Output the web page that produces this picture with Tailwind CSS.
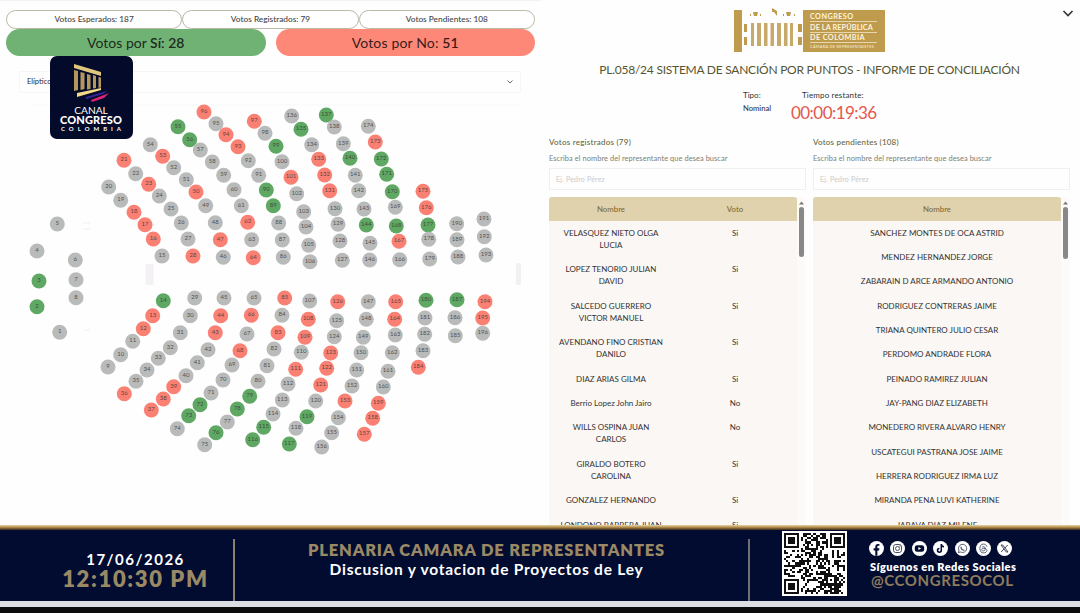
<!DOCTYPE html>
<html lang="es">
<head>
    <meta charset="UTF-8">
    <meta name="viewport" content="width=device-width, initial-scale=1.0">
    <title>Canal Congreso - Votación</title>
    <script src="https://cdn.jsdelivr.net/npm/@tailwindcss/browser@4"></script>
</head>
<body class="w-[1080px] h-[613px] overflow-hidden bg-black font-['Lato',sans-serif] text-[#2b2b2b]">
    <div class="flex flex-col h-[613px]">

        <main class="flex h-[525px] overflow-hidden bg-[#fefefe]">
            <!-- Left: results and seats -->
            <section class="relative w-[541px] shrink-0 flex flex-col pt-[9px] border-t border-[#f3f3f3]">
                <div class="flex ml-[6px] w-[529px] h-[19px] text-[8.3px] font-medium text-[#444]">
                    <div class="flex-1 flex items-center justify-center rounded-full border border-[#bcb9a8] bg-white"><span>Votos Esperados: 187</span></div>
                    <div class="flex-1 flex items-center justify-center rounded-full border border-[#bcb9a8] bg-white"><span>Votos Registrados: 79</span></div>
                    <div class="flex-1 flex items-center justify-center rounded-full border border-[#bcb9a8] bg-white"><span>Votos Pendientes: 108</span></div>
                </div>
                <div class="flex gap-[10px] ml-[6px] w-[529px] h-[27px] text-[14px] text-[#1d2b1d]">
                    <div class="flex-1 flex items-center justify-center rounded-full bg-[#6fb274]"><span>Votos por <span class="font-semibold">Sí: 28</span></span></div>
                    <div class="flex-1 flex items-center justify-center rounded-full bg-[#fe8878] text-[#3a1d1a]"><span class="tracking-[0.15px]">Votos por No: <span class="font-semibold">51</span></span></div>
                </div>
                <div class="flex items-center justify-between mt-[15px] ml-[19px] w-[502px] h-[22px] px-[7px] border border-[#f6f6f6] text-[7.5px]">
                    <span>Elíptico</span>
                    <svg class="w-[6px] h-[4px]" viewBox="0 0 6 4" fill="none" stroke="#666"><path d="M.5.5 3 3 5.500.5"/></svg>
                </div>
                <svg id="seats" class="w-[541px] h-[432px] shrink-0" viewBox="0 93 541 432" font-family="Lato, sans-serif" font-size="6" text-anchor="middle">
                    <path d="M30 105H521" stroke="#f8f8f8"/>
                    <rect x="145.500" y="264" width="8" height="21" rx="1" fill="#f3f1f3"/>
                    <rect x="516" y="263" width="5" height="22" rx="1" fill="#f1f0f2"/>
                    <path d="M83 223h7M83 229h7M84 330h6" stroke="#f0f0f0"/>
                </svg>

                <!-- Channel logo -->
                <div class="absolute left-[49.500px] top-[55px] w-[83px] h-[83px] rounded-[7px] bg-[#030a2a] flex flex-col items-center text-white">
                    <svg class="mt-[7px] w-[36px] h-[41px]" viewBox="0 0 36 41">
                        <path d="M1 1 28 9v4L1 5z" fill="#dfc67c"/>
                        <path d="M1 7l4 1v19l-4 1zM7.500 9l4 1v16l-4 1zM14 11l3.500 1v14l-3.500.5zM20 12l3 1v12l-3 .5zM25.500 14l2.500.5v10l-2.500.5z" fill="#b5975a"/>
                        <path d="M4 30 28 25v2L4 34z" fill="#f2da88"/>
                        <path d="M13 34 34 28l-4 3-17 5z" fill="#35289b"/>
                        <path d="M18 37 36 30l-5 5-12 4z" fill="#db2473"/>
                    </svg>
                    <span class="mt-[2px] text-[10.200px] leading-[9px]">CANAL</span>
                    <span class="text-[11px] leading-[10px] font-black tracking-[0.150px]">CONGRESO</span>
                    <span class="text-[6px] leading-[8px] font-bold tracking-[4px] mr-[-4px]">COLOMBIA</span>
                </div>
            </section>

            <!-- Right: bill and lists -->
            <section class="relative flex-1 flex flex-col">
                <svg class="absolute left-[521px] top-[9px] w-[12px] h-[9px]" viewBox="0 0 12 9" fill="none" stroke="#333" stroke-width="1.600"><path d="M1.500 2 6 6.500 10.500 2"/></svg>
                <div class="flex ml-[193px] mt-[7px] h-[45px]">
                    <svg class="w-[69px] h-[45px]" viewBox="0 0 69 45" fill="#bf9b4e">
                        <path d="M0 3h8v42H0zM10 17h3v8h-3zM10 30h3v8h-3zM64 17h4v8h-4zM64 30h4v8h-4z"/>
                        <path d="M17 16h3v23h-3zM23 16h4v23h-4zM30 16h3.500v23H30zM36.500 16H40v23h-3.500zM43 16h4v23h-4zM50 16h3.500v23H50zM56 16h3v23h-3z" fill="#c6a96b"/>
                        <path d="M19 5h5l-1 4h-3zM38 1l5 3v5l-3-4h-2zM52 5h5l-1 4h-3zM16 7h1v2h-1zM26 7h1v2h-1zM49 7h1v2h-1zM60 7h1v2h-1z"/>
                    </svg>
                    <div class="mt-[3px] w-[82px] h-[42px] bg-[#bf9b4e] text-[#fdf3dc] pl-[7px] pr-[8px] pt-[2px] text-[7.300px] font-bold">
                        <div class="h-[10px] leading-[9px] border-b border-[#e8d7ae] tracking-[0.400px]">CONGRESO</div>
                        <div class="h-[11px] leading-[11px] border-b border-[#e8d7ae] whitespace-nowrap tracking-[0.100px]">DE LA REPÚBLICA</div>
                        <div class="h-[10px] leading-[10px] border-b border-[#e8d7ae] tracking-[0.400px]">DE COLOMBIA</div>
                        <div class="text-[3.900px] leading-[8px] whitespace-nowrap font-normal tracking-[0.300px]">CÁMARA DE REPRESENTANTES</div>
                    </div>
                </div>
                <h1 class="mt-[10px] h-[16px] leading-[16px] pr-[2px] text-center text-[12px] tracking-[-0.240px] text-[#55552f] whitespace-nowrap">PL.058/24 SISTEMA DE SANCIÓN POR PUNTOS - INFORME DE CONCILIACIÓN</h1>
                <div class="flex ml-[202px] mt-[11px] h-[40px] text-[8px] text-[#333]">
                    <div class="w-[48px] leading-[13px]"><p>Tipo:</p><p class="text-[7.600px] font-medium">Nominal</p></div>
                    <div class="w-[86px]">
                        <p class="leading-[13px] pl-[11px] tracking-[0.150px]">Tiempo restante:</p>
                        <p class="text-[17px] leading-[22px] tracking-[-0.550px] text-[#e3584f] whitespace-nowrap">00:00:19:36</p>
                    </div>
                </div>

                <div class="flex gap-[7px] ml-[8px] mt-[8px]">
                    <div class="w-[257px]">
                        <p class="text-[8px] leading-[12px] font-medium tracking-[0.240px] text-[#66663d]">Votos registrados (79)</p>
                        <p class="mt-[5px] text-[7.400px] leading-[12px] tracking-[0.080px] text-[#7b8073]">Escriba el nombre del representante que desea buscar</p>
                        <div class="mt-[3px] h-[22px] border border-[#eef0f0] px-[6px] text-[7px] leading-[21px] tracking-[0.200px] text-[#c9c9c9]">Ej. Pedro Pérez</div>
                        <div class="mt-[7px] flex h-[328px] overflow-hidden bg-[#fcfbf9] text-[8px]">
                            <div class="w-[248px] bg-[#faf7f4]">
                                <div class="grid grid-cols-2 h-[24px] pt-[1px] items-center text-center rounded-t-[3px] bg-[#dfd2ad] text-[#806b36] text-[7.800px] font-medium"><span>Nombre</span><span>Voto</span></div>
                                <div id="registrados" class="mt-[-0.600px] text-center leading-[12.150px] text-[#333]"></div>
                            </div>
                            <div class="w-[9px] flex flex-col items-center pt-[4px]">
                                <svg class="w-[5px] h-[4px]" viewBox="0 0 5 4" fill="#777"><path d="M0 3.500 2.500.5 5 3.500z"/></svg>
                                <div class="mt-[2px] w-[5px] h-[50px] rounded-full bg-[#888]"></div>
                            </div>
                        </div>
                    </div>
                    <div class="w-[257px]">
                        <p class="text-[8px] leading-[12px] font-medium tracking-[0.200px] text-[#66663d]">Votos pendientes (108)</p>
                        <p class="mt-[5px] text-[7.400px] leading-[12px] tracking-[0.080px] text-[#7b8073]">Escriba el nombre del representante que desea buscar</p>
                        <div class="mt-[3px] h-[22px] border border-[#eef0f0] px-[6px] text-[7px] leading-[21px] tracking-[0.200px] text-[#c9c9c9]">Ej. Pedro Pérez</div>
                        <div class="mt-[7px] flex h-[328px] overflow-hidden bg-[#fcfbf9] text-[8px]">
                            <div class="w-[248px] bg-[#faf7f4]">
                                <div class="flex h-[24px] pt-[1px] items-center justify-center rounded-t-[3px] bg-[#dfd2ad] text-[#806b36] text-[7.800px] font-medium"><span>Nombre</span></div>
                                <div id="pendientes" class="mt-[-0.600px] text-center leading-[12.150px] text-[#333]"></div>
                            </div>
                            <div class="w-[9px] flex flex-col items-center pt-[4px]">
                                <svg class="w-[5px] h-[4px]" viewBox="0 0 5 4" fill="#777"><path d="M0 3.500 2.500.5 5 3.500z"/></svg>
                                <div class="mt-[2px] w-[5px] h-[52px] rounded-full bg-[#888]"></div>
                            </div>
                        </div>
                    </div>
                </div>
            </section>
        </main>

        <div class="h-[5px] shrink-0 bg-linear-to-b from-[#e9d7a5] via-[#ab8545] to-[#3b2d1c]"></div>

        <!-- Lower third -->
        <footer class="flex h-[71px] shrink-0 bg-[#020c31] font-bold text-white">
            <div class="w-[233px] pl-[38px] pt-[20px] flex flex-col items-center">
                <span class="text-[15px] leading-[18px] tracking-[1.500px]">17/06/2026</span>
                <span class="text-[22px] leading-[22px] tracking-[1.650px] font-extrabold text-[#9a8965] whitespace-nowrap">12:10:30 PM</span>
            </div>
            <div class="mt-[9px] w-[2px] bg-[#8a806c]"></div>
            <div class="w-[513px] pt-[11px] pr-[10px] flex flex-col items-center">
                <span class="text-[16.500px] leading-[19px] tracking-[0.800px] font-extrabold text-[#9a8965] whitespace-nowrap">PLENARIA CAMARA DE REPRESENTANTES</span>
                <span class="text-[15.500px] leading-[18px] tracking-[0.780px] whitespace-nowrap">Discusion y votacion de Proyectos de Ley</span>
            </div>
            <div class="mt-[9px] w-[2px] bg-[#746f72]"></div>
            <svg id="qr" class="ml-[32px] mt-[1px] w-[65px] h-[65px] bg-white" viewBox="-1 -1 31 31" shape-rendering="crispEdges"></svg>
            <div class="ml-[22px] pt-[11px] w-[150px]">
                <div class="flex gap-[6.400px]">
                    <svg class="w-[15px] h-[15px]" viewBox="0 0 15 15"><circle cx="7.500" cy="7.500" r="7.500" fill="#fff"/><path d="M6.300 14.800V9.400H4.600V7.300h1.700V5.800c0-1.900 1-2.900 2.700-2.900h1.400v1.900H9.300c-.7 0-.9.4-.9 1v1.500h2l-.3 2.100H8.400v5.400z" fill="#020c31"/></svg>
                    <svg class="w-[15px] h-[15px]" viewBox="0 0 15 15"><circle cx="7.500" cy="7.500" r="7.500" fill="#fff"/><g fill="none" stroke="#4a5068" stroke-width="1"><rect x="3.500" y="3.500" width="8" height="8" rx="2.300"/><circle cx="7.500" cy="7.500" r="2"/></g><circle cx="9.900" cy="5.100" r=".6" fill="#4a5068"/></svg>
                    <svg class="w-[15px] h-[15px]" viewBox="0 0 15 15"><circle cx="7.500" cy="7.500" r="7.500" fill="#fff"/><rect x="2.800" y="4.200" width="9.400" height="6.600" rx="2.300" fill="#020c31"/><path d="M6.400 5.900v3.200l2.800-1.600z" fill="#fff"/></svg>
                    <svg class="w-[15px] h-[15px]" viewBox="0 0 15 15"><circle cx="7.500" cy="7.500" r="7.500" fill="#fff"/><path d="M8.300 3v6.300a1.900 1.900 0 1 1-1.900-1.900M8.300 3.200c.2 1.600 1.200 2.500 2.700 2.600" fill="none" stroke="#020c31" stroke-width="1.500"/></svg>
                    <svg class="w-[15px] h-[15px]" viewBox="0 0 15 15"><circle cx="7.500" cy="7.500" r="7.500" fill="#fff"/><g fill="none" stroke="#4a5068"><path d="M3.300 11.700l.7-2.300a4.100 4.100 0 1 1 1.600 1.600z" stroke-width=".9"/><path d="M6 5.700c0 2 1.500 3.500 3.400 3.600" stroke-width="1.200"/></g></svg>
                    <svg class="w-[15px] h-[15px]" viewBox="0 0 15 15"><circle cx="7.500" cy="7.500" r="7.500" fill="#fff"/><path d="M10.900 5.700C10.400 4 9.300 3.100 7.500 3.100 5 3.100 3.900 4.800 3.900 7.500s1.200 4.400 3.600 4.400c2 0 3.400-1 3.400-2.500 0-1.400-1.400-2.100-3.100-2.100-1.300 0-2.100.5-2.100 1.400 0 .8.700 1.200 1.600 1.200 1.300 0 1.900-.8 1.900-2.200 0-1.300-.6-2-1.800-2-.6 0-1.100.2-1.400.7" fill="none" stroke="#4a5068" stroke-width=".9"/></svg>
                    <svg class="w-[15px] h-[15px]" viewBox="0 0 15 15"><circle cx="7.500" cy="7.500" r="7.500" fill="#fff"/><path d="M4 4h1.700l5.300 7H9.300zM10.700 4l-2.800 3.100M4.200 11l2.900-3.200" fill="none" stroke="#30364f" stroke-width=".9"/></svg>
                </div>
                <p class="mt-[4px] ml-[1px] text-[11px] leading-[13px] font-extrabold tracking-[0.450px] whitespace-nowrap">Síguenos en Redes Sociales</p>
                <p class="ml-[2px] text-[15px] leading-[15px] font-bold tracking-[0.600px] text-[#8d7b5b] whitespace-nowrap">@CCONGRESOCOL</p>
            </div>
        </footer>
        <div class="h-[6px] shrink-0 bg-[#dcdee2]"></div>
        <div class="h-[6px] shrink-0 bg-[#0c0c0c]"></div>
    </div>

    <script>
        // n: sin voto, s: sí, r: no
        const colors = { n: '#b9baba', s: '#5fa864', r: '#f98073' };
        const seats = [
            [5,57.3,224],[4,37,251],[6,75.3,260],[3,39,281,'s'],[7,76,279.7],[2,37,306.7,'s'],[8,76,297.7],[1,59.7,332.3],
            [20,108.7,187],[19,120.7,200.3],[18,134,212.3,'r'],[17,145,224.7,'r'],[16,153.3,239,'r'],[15,162,256],
            [21,124,160.3,'r'],[22,135.7,173.7],[23,148.7,184.3,'r'],[24,159.3,196],[25,171,209],[26,181.3,223],[27,188,239],[28,193,256,'r'],
            [54,150.3,144.7],[53,162.7,156.3,'r'],[52,173.7,167.7],[51,186.3,179.7],[50,196,192,'r'],[49,205.7,205.7],[48,215.3,222.7],[47,220.3,239.7,'r'],[46,223.3,257.3],
            [55,178,126.7,'s'],[56,189.7,139.7,'s'],[57,200.3,150],[58,212.3,162],[59,223.7,175.3],[60,234,189.7],[61,241.3,205.7],[62,247.7,222.3,'r'],[63,251.7,239.7],[64,253.3,257.7,'r'],
            [96,204,112,'r'],[95,216,123.7],[94,226,134.7,'r'],[93,238,146.7,'r'],[92,248.3,160.7],[91,258.7,175.3],[90,266.3,190,'s'],[89,273.3,205.7,'s'],[88,278.7,223],[87,282.3,240],[86,283.3,257.3],
            [97,254.3,121.3,'r'],[98,265,133.3],[99,276,146.3,'s'],[100,282,161.7],[101,291,177.3,'r'],[102,296.7,193.7],[103,303.7,211.7],[104,306,227],[105,308.7,245.3],[106,310,261.7],
            [136,291.7,116],[135,301,129.3,'s'],[134,311.7,144.7],[133,318.7,159.3,'r'],[132,324.7,175,'r'],[131,329.7,190.7,'r'],[130,335,208.7],[129,338,224.3],[128,340,241],[127,342.3,260.3],
            [137,326.3,115,'s'],[138,334.3,127],[139,343.3,143.7],[140,350,158.3,'s'],[141,355.3,175.3],[142,358.7,190.7],[143,364,209],[144,366.3,225,'s'],[145,370,243.3],[146,369.7,260],
            [174,368.3,126.3],[173,375.3,142,'r'],[172,381.3,159,'s'],[171,386.7,174.3,'s'],[170,392.3,191.7,'s'],[169,395.3,207.3],[168,396.3,226,'s'],[167,399,241.3,'r'],[166,399.7,259.7],
            [175,423,191.3,'r'],[176,426.3,207.7,'r'],[177,428,225,'s'],[178,428.7,239.3],[179,429.7,259],
            [190,456.7,223.7],[189,457,239.7],[188,458,257],[191,484,219],[192,484.3,236.7],[193,486,255],
            [14,163.3,300.7,'s'],[13,152.7,315.7,'r'],[12,143.3,328.7,'r'],[11,132.7,341.3],[10,120.7,354.7],[9,108,367],
            [29,194.7,298],[30,190.3,315.7],[31,180.3,332.7],[32,170.3,347.7],[33,158.3,358.3],[34,147,370],[35,136,381.3],[36,124.3,393.7,'r'],
            [45,224,298],[44,220.7,315.7,'r'],[43,215.3,332.7,'r'],[42,208,349.7],[41,197.3,362.7],[40,186,375.7],[39,173.7,386.7,'r'],[38,163.3,399,'r'],[37,151.3,410,'r'],
            [65,254,298],[66,251.3,315.3,'r'],[67,247,334],[68,240,350.7,'r'],[69,232,365],[70,223,380],[71,211,393],[72,200,404.7,'s'],[73,188.7,415.7,'s'],[74,177.3,428.7],
            [85,284.7,298,'r'],[84,282,315.3],[83,278,332.7,'r'],[82,274,349],[81,267,365.7],[80,258,381.3],[79,249.7,396.3,'s'],[78,237.3,409,'s'],[77,227.3,422],[76,216,432.7,'s'],[75,204.7,444.7],
            [107,309.7,301],[108,308.3,319.3,'r'],[109,305,337.3,'r'],[110,301.3,352.3],[111,295.7,369.3,'r'],[112,288,384],[113,282.3,400],[114,273,414],[115,263.7,427.3,'s'],[116,252.7,439.7,'s'],
            [126,337.7,301.7,'r'],[125,336.7,320.7],[124,334.3,336.7],[123,330.7,353,'r'],[122,326.7,368.3,'r'],[121,320.7,385,'r'],[120,315.7,401],[119,307,416.7,'s'],[118,296,428.3],[117,289.3,444,'s'],
            [147,368.3,301.7],[148,366.3,319.3],[149,363.3,337.3],[150,361,352.7],[151,356.7,370],[152,352,386],[153,345,401,'r'],[154,338.3,417.7],[155,331.7,432.7],[156,321.7,447],
            [165,395.7,301.7,'r'],[164,394.7,319.3,'r'],[163,395.3,335],[162,392.3,352.7],[161,388,371.3],[160,383.3,387],[159,378.3,403.3,'r'],[158,372.7,418.3,'r'],[157,364.3,434.3,'r'],
            [180,426,300.3,'s'],[181,425,318],[182,424.7,334.3],[183,423,350.7],[184,418.3,367.3,'r'],
            [187,457,299.7,'s'],[186,455,317.7],[185,455.3,335.7],[194,485,301.7,'r'],[195,482.7,318,'r'],[196,482.7,333.3]
        ];
        document.getElementById('seats').innerHTML += seats.map(([n, x, y, v = 'n']) =>
            `<circle cx="${x}" cy="${y}" r="7.500" fill="${colors[v]}"/><text x="${x}" y="${y + 1}" fill="#333" fill-opacity=".8">${n}</text>`
        ).join('');

        const registrados = [
            ['VELASQUEZ NIETO OLGA<br>LUCIA', 'Si'], ['LOPEZ TENORIO JULIAN<br>DAVID', 'Si'],
            ['SALCEDO GUERRERO<br>VICTOR MANUEL', 'Si'], ['AVENDANO FINO CRISTIAN<br>DANILO', 'Si'],
            ['DIAZ ARIAS GILMA', 'Si'], ['Berrio Lopez John Jairo', 'No'],
            ['WILLS OSPINA JUAN<br>CARLOS', 'No'], ['GIRALDO BOTERO<br>CAROLINA', 'Si'],
            ['GONZALEZ HERNANDO', 'Si'], ['LONDONO BARRERA JUAN', 'Si']
        ];
        document.getElementById('registrados').innerHTML = registrados.map(([name, vote]) =>
            `<div class="grid grid-cols-2 py-[6.100px]"><span class="whitespace-nowrap">${name}</span><span>${vote}</span></div>`
        ).join('');

        const pendientes = [
            'SANCHEZ MONTES DE OCA ASTRID', 'MENDEZ HERNANDEZ JORGE', 'ZABARAIN D ARCE ARMANDO ANTONIO',
            'RODRIGUEZ CONTRERAS JAIME', 'TRIANA QUINTERO JULIO CESAR', 'PERDOMO ANDRADE FLORA',
            'PEINADO RAMIREZ JULIAN', 'JAY-PANG DIAZ ELIZABETH', 'MONEDERO RIVERA ALVARO HENRY',
            'USCATEGUI PASTRANA JOSE JAIME', 'HERRERA RODRIGUEZ IRMA LUZ', 'MIRANDA PENA LUVI KATHERINE', 'JARAVA DIAZ MILENE'
        ];
        document.getElementById('pendientes').innerHTML = pendientes.map(name =>
            `<div class="py-[6.100px]">${name}</div>`
        ).join('');

        // QR: finder squares in three corners, the rest is a fixed pattern
        const finder = (r, c) => {
            const m = Math.max(Math.abs(r - 3), Math.abs(c - 3));
            return m === 3 || m <= 1;
        };
        let seed = 71, qr = '';
        for (let r = 0; r < 29; r++) {
            for (let c = 0; c < 29; c++) {
                seed = (seed * 1103515245 + 12345) % 2147483648;
                let on = (seed >> 16) % 2 === 0;
                if (r < 8 && c < 8) on = r < 7 && c < 7 && finder(r, c);
                else if (r < 8 && c > 20) on = r < 7 && c > 21 && finder(r, c - 22);
                else if (r > 20 && c < 8) on = r > 21 && c < 7 && finder(r - 22, c);
                else if (r > 19 && r < 25 && c > 19 && c < 25) on = Math.max(Math.abs(r - 22), Math.abs(c - 22)) !== 1;
                if (on) qr += `M${c} ${r}h1v1h-1z`;
            }
        }
        document.getElementById('qr').innerHTML = `<path d="${qr}" fill="#111"/>`;
    </script>
</body>
</html>
